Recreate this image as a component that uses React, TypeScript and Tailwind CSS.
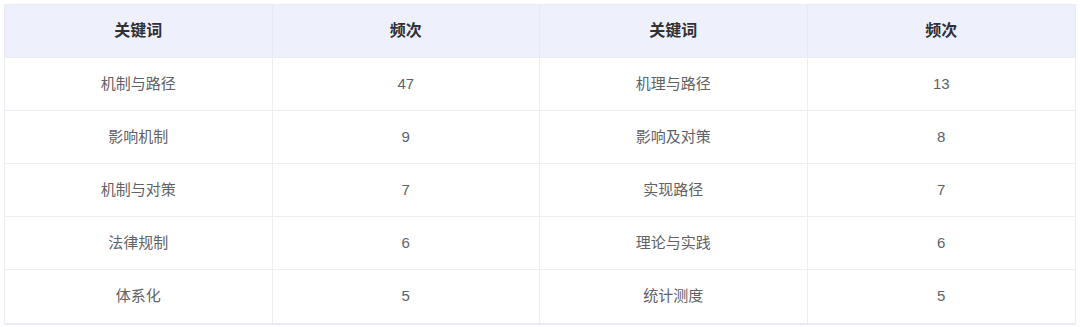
import React from "react";

const rows: [string, string, string, string][] = [
  ["机制与路径", "47", "机理与路径", "13"],
  ["影响机制", "9", "影响及对策", "8"],
  ["机制与对策", "7", "实现路径", "7"],
  ["法律规制", "6", "理论与实践", "6"],
  ["体系化", "5", "统计测度", "5"],
];

const headers = ["关键词", "频次", "关键词", "频次"];

export default function App() {
  return (
    <div
      className="w-[1080px] h-[327px] bg-white p-[4px]"
      style={{ fontFamily: '"Liberation Sans", "Noto Sans CJK SC", sans-serif' }}
    >
      <div className="w-[1072px] border border-[#e9ecf5] border-b-2">
        <div className="grid grid-cols-4 bg-[#eef0fc] h-[53px] border-b border-[#e9ecf5]">
          {headers.map((h, i) => (
            <div
              key={i}
              className={`flex items-center justify-center text-[16px] font-bold text-[#303133] ${i < 3 ? "border-r border-[#e6e9f6]" : ""}`}
            >
              {h}
            </div>
          ))}
        </div>
        {rows.map((r, ri) => (
          <div
            key={ri}
            className={`grid grid-cols-4 h-[53px] ${ri < rows.length - 1 ? "border-b border-[#eceef4]" : ""}`}
          >
            {r.map((c, ci) => (
              <div
                key={ci}
                className={`flex items-center justify-center text-[15px] text-[#606266] ${ci < 3 ? "border-r border-[#eceef4]" : ""}`}
              >
                {c}
              </div>
            ))}
          </div>
        ))}
      </div>
    </div>
  );
}
